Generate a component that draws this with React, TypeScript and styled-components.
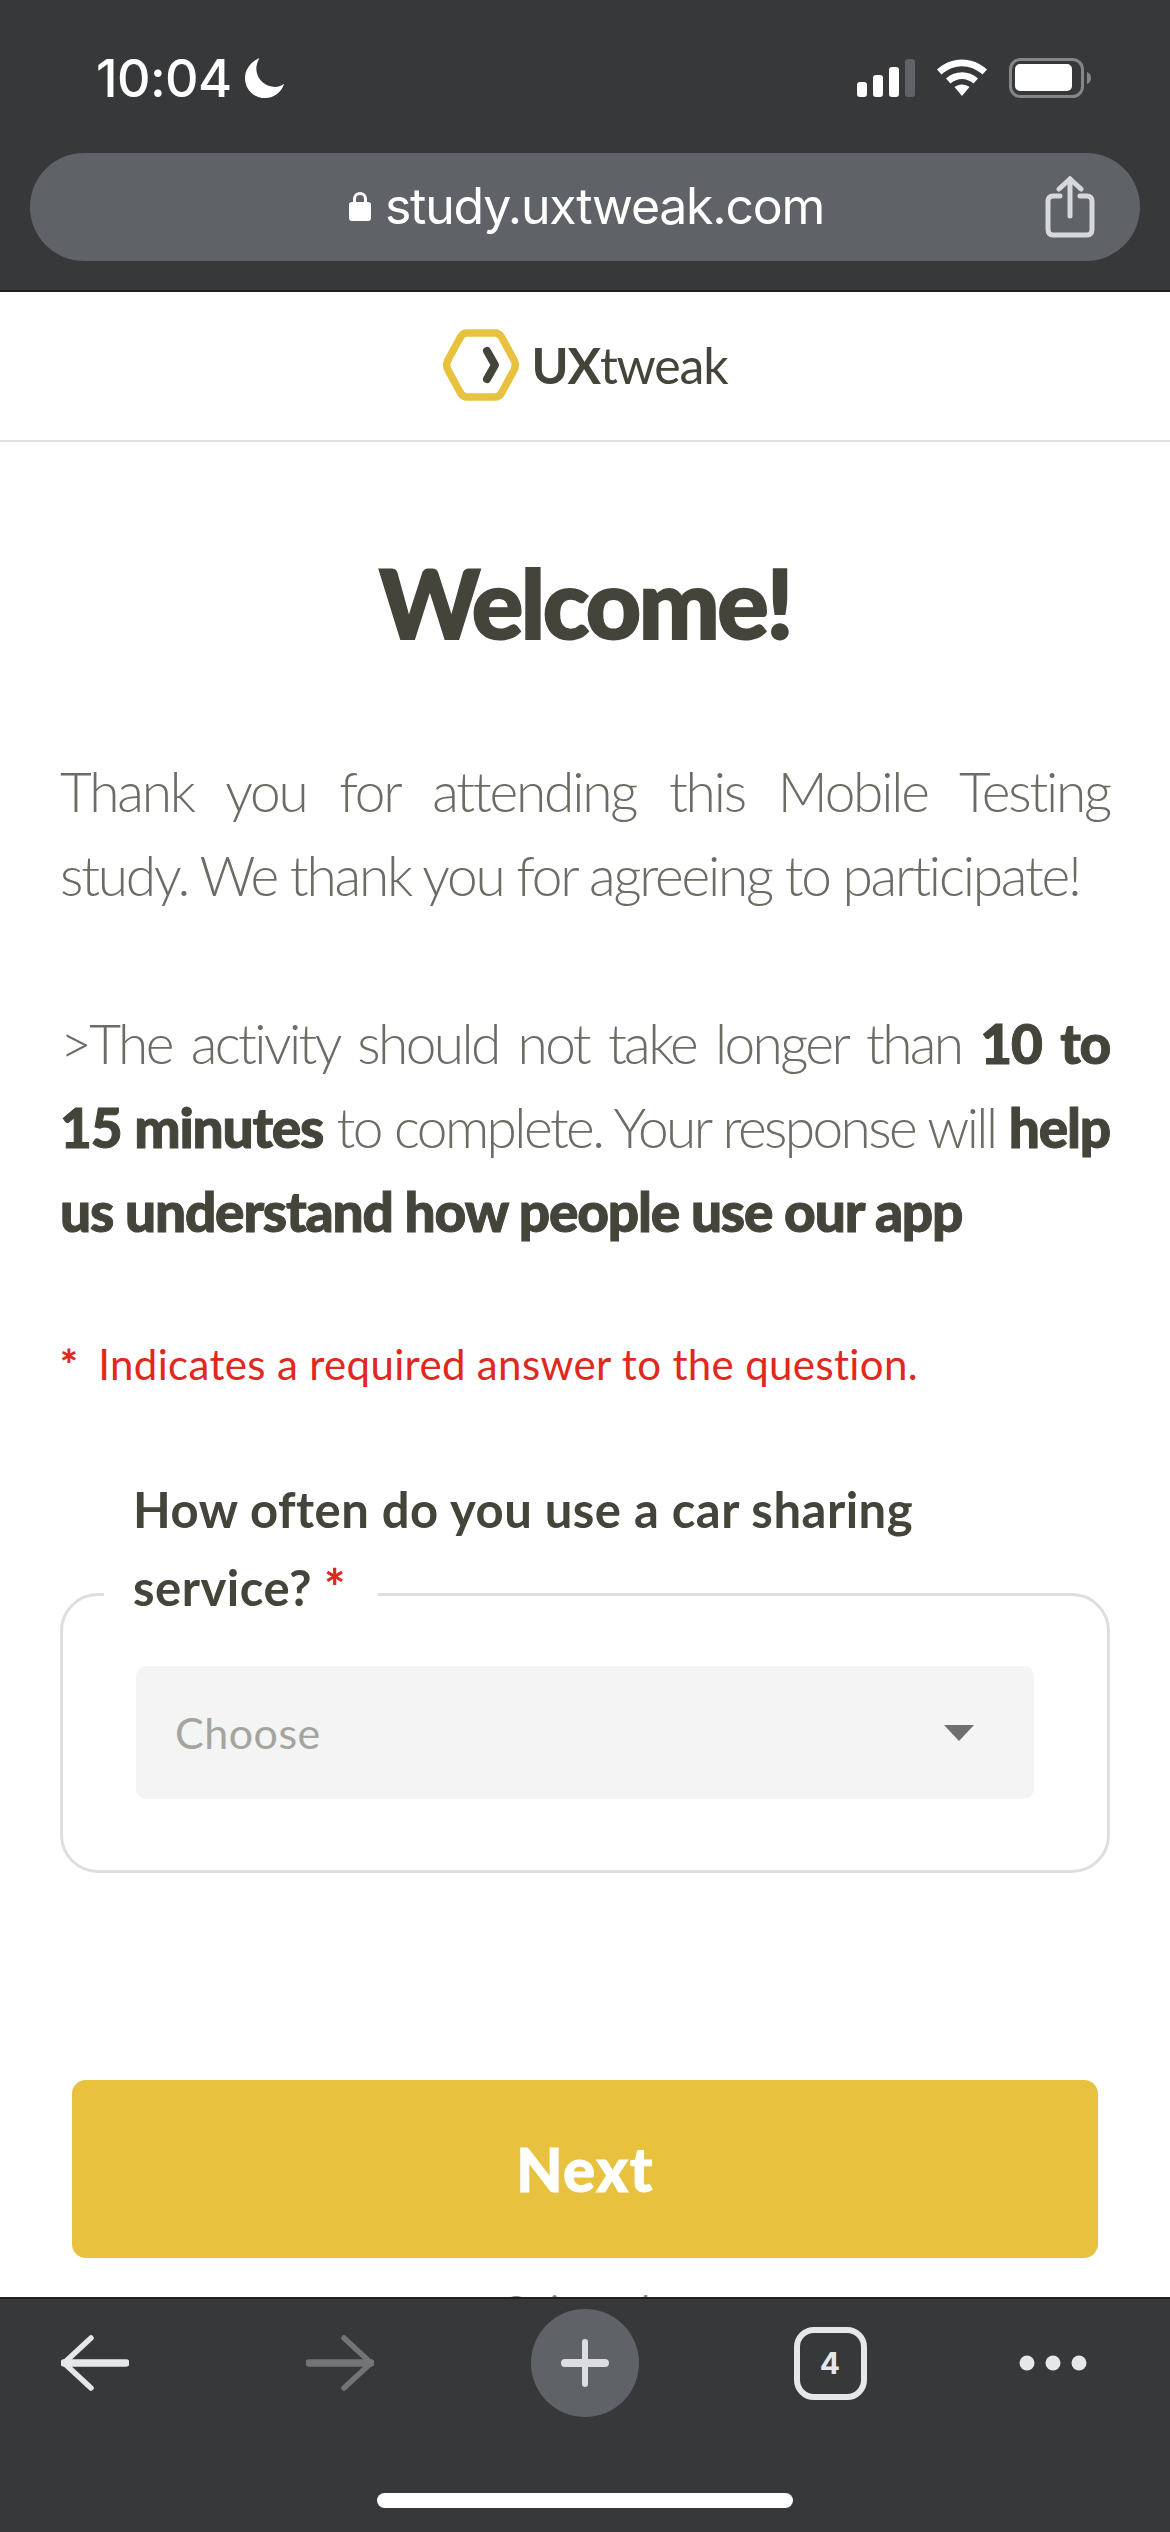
import React from "react";
import styled, { createGlobalStyle } from "styled-components";

const GlobalStyle = createGlobalStyle`
  html, body {
    margin: 0;
    padding: 0;
    background: #fff;
  }
  * {
    box-sizing: border-box;
  }
`;

const Page = styled.div`
  width: 1170px;
  height: 2532px;
  display: flex;
  flex-direction: column;
  overflow: hidden;
  font-family: "Lato", "Noto Sans", sans-serif;
`;

const TopChrome = styled.header`
  height: 292px;
  flex: none;
  background: #37383a;
  border-bottom: 2px solid #1f1f20;
  padding: 0 30px;
`;

const StatusBar = styled.div`
  height: 153px;
  display: flex;
  justify-content: space-between;
  align-items: flex-start;
  padding: 48px 0 0 66px;
`;

const Clock = styled.div`
  display: flex;
  align-items: center;
  gap: 13px;
  height: 60px;
  color: #fff;
  font-family: "Inter", sans-serif;
  font-size: 52px;
  font-weight: 500;
  letter-spacing: -0.6px;
`;

const StatusIcons = styled.div`
  display: flex;
  align-items: center;
  height: 60px;
  gap: 22px;
  margin-right: 49px;
`;

const UrlBar = styled.div`
  height: 108px;
  border-radius: 54px;
  background: #5f6266;
  display: flex;
  align-items: center;
  justify-content: center;
  gap: 14px;
  position: relative;
  color: #fff;
  font-family: "Inter", sans-serif;
  font-size: 50px;
  letter-spacing: -1.25px;
  padding: 0 0 2px 3px;
`;

const ShareButton = styled.span`
  position: absolute;
  right: 45px;
  top: 23px;
  display: flex;
`;

const LogoBar = styled.div`
  height: 150px;
  flex: none;
  display: flex;
  align-items: center;
  justify-content: center;
  gap: 13px;
  border-bottom: 2px solid #e0e0e0;
  padding-bottom: 3px;
`;

const LogoText = styled.div`
  color: #44443a;
  font-size: 50px;
  letter-spacing: -1.2px;
  b {
    font-weight: 700;
  }
`;

const Main = styled.main`
  flex: 1;
  min-height: 0;
  overflow: hidden;
  padding: 0 60px;
  color: #44443a;
`;

const Title = styled.h1`
  margin: 100px 0 0;
  text-align: center;
  font-size: 96px;
  line-height: 120px;
  font-weight: 900;
  letter-spacing: -2.5px;
  -webkit-text-stroke: 2px #44443a;
`;

const Intro = styled.p`
  margin: 0;
  color: #6c6c64;
  font-size: 55px;
  font-weight: 300;
  line-height: 84px;
  letter-spacing: -2.2px;
  text-align: justify;
  b {
    color: #44443a;
    font-weight: 900;
    letter-spacing: -1.2px;
    -webkit-text-stroke: 1px #44443a;
  }
`;

const FirstIntro = styled(Intro)`
  margin-top: 87px;
`;

const SecondIntro = styled(Intro)`
  margin-top: 84px;
  letter-spacing: -2.6px;
`;

const IntroLine = styled.span<{ $justified?: boolean }>`
  display: block;
  white-space: nowrap;
  text-align-last: ${(p) => (p.$justified ? "justify" : "left")};
`;

const Required = styled.div`
  margin-top: 83px;
  display: flex;
  gap: 20px;
  color: #e0281e;
  font-size: 42px;
  line-height: 56px;
  letter-spacing: 0.35px;
`;

const Star = styled.span`
  color: #e0281e;
  font-weight: 900;
`;

const QuestionSet = styled.section`
  margin-top: 201px;
  padding: 0 73px 71px;
  border: 3px solid #dedede;
  border-radius: 38px;
`;

const Question = styled.div`
  margin: -126px 0 0 -3px;
  font-size: 49px;
  font-weight: 700;
  line-height: 78px;
  letter-spacing: 0.5px;
`;

const QuestionTail = styled.span`
  display: inline-block;
  margin-left: -29px;
  padding: 0 32px 0 29px;
  background: #fff;
`;

const Select = styled.div`
  height: 133px;
  margin-top: 40px;
  border-radius: 10px;
  background: #f4f4f4;
  padding: 0 60px 0 39px;
  display: flex;
  align-items: center;
  justify-content: space-between;
  color: #a5a5a0;
  font-size: 43px;
  letter-spacing: 0.5px;
`;

const Caret = styled.span`
  width: 0;
  height: 0;
  border-left: 15px solid transparent;
  border-right: 15px solid transparent;
  border-top: 16px solid #6e6e6e;
`;

const NextButton = styled.button`
  display: block;
  width: 1026px;
  height: 178px;
  margin: 207px 0 0 12px;
  border: 0;
  border-radius: 14px;
  background: #e8c23f;
  color: #fff;
  font-family: inherit;
  font-size: 60px;
  font-weight: 900;
  letter-spacing: 1.5px;
  -webkit-text-stroke: 1px #fff;
`;

const FooterLink = styled.div`
  margin-top: 25px;
  text-align: center;
  color: #8a8a84;
  font-size: 36px;
  line-height: 50px;
`;

const BottomChrome = styled.footer`
  height: 235px;
  flex: none;
  background: #37383a;
  border-top: 2px solid #1f1f20;
  display: flex;
  flex-direction: column;
  align-items: center;
`;

const ToolRow = styled.nav`
  align-self: flex-start;
  height: 108px;
  margin: 10px 0 0 -27.5px;
  display: grid;
  grid-template-columns: repeat(4, 245px) 201px;
  align-items: center;
  justify-items: center;
`;

const PlusButton = styled.span`
  width: 108px;
  height: 108px;
  border-radius: 50%;
  background: #5f6266;
  display: flex;
  align-items: center;
  justify-content: center;
`;

const TabCount = styled.span`
  width: 73px;
  height: 73px;
  border: 6px solid #e6e7ea;
  border-radius: 20px;
  display: flex;
  align-items: center;
  justify-content: center;
  color: #e6e7ea;
  font-family: "Inter", sans-serif;
  font-size: 30px;
  font-weight: 700;
`;

const HomeIndicator = styled.span`
  width: 416px;
  height: 15px;
  margin-top: 76px;
  border-radius: 8px;
  background: #fff;
`;

const SignalIcon = () => (
  <svg width="58" height="38" viewBox="0 0 58 38">
    <rect x="0" y="23" width="10" height="15" rx="3" fill="#fff" />
    <rect x="16" y="16" width="10" height="22" rx="3" fill="#fff" />
    <rect x="32" y="8" width="10" height="30" rx="3" fill="#fff" />
    <rect x="48" y="0" width="10" height="38" rx="3" fill="#5f6266" />
  </svg>
);

const WifiIcon = () => (
  <svg width="50" height="38" viewBox="0 0 50 38">
    <path d="M0 10.5 C14 -3 36 -3 50 10.5 L45.5 15.5 C33 4.5 17 4.5 4.5 15.5 Z" fill="#fff" />
    <path d="M9 19.5 C18 11 32 11 41 19.5 L36.5 24.5 C29.5 18.5 20.5 18.5 13.5 24.5 Z" fill="#fff" />
    <path d="M17.5 28 C22 24.5 28 24.5 32.5 28 L25 37 Z" fill="#fff" />
  </svg>
);

const BatteryIcon = () => (
  <svg width="82" height="40" viewBox="0 0 82 40">
    <rect x="1.5" y="1.5" width="72" height="37" rx="10" fill="none" stroke="#85868a" strokeWidth="3" />
    <rect x="6" y="6" width="57" height="27" rx="5" fill="#fff" />
    <path d="M78 14 C81 15 82 17.5 82 20 C82 22.5 81 25 78 26 Z" fill="#85868a" />
  </svg>
);

const MoonIcon = () => (
  <svg width="40" height="40" viewBox="0 0 42 42">
    <path
      d="M15 0 C6 4 0 12 0 21 C0 33 9 42 21 42 C31 42 39 35 41 27 C37 30 32 31 28 30 C18 28 11 19 12 9 C12.5 6 13.5 3 15 0 Z"
      fill="#fff"
    />
  </svg>
);

const LockIcon = () => (
  <svg width="22" height="30" viewBox="0 0 22 30">
    <path d="M5.5 13 V8 C5.5 0.5 16.5 0.5 16.5 8 V13" fill="none" stroke="#fff" strokeWidth="3" />
    <rect x="0" y="11" width="22" height="19" rx="3" fill="#fff" />
  </svg>
);

const ShareIcon = () => (
  <svg width="50" height="62" viewBox="0 0 50 62" fill="none" stroke="#d6d8de" strokeWidth="5" strokeLinecap="round">
    <path d="M15 20 H8 C5 20 3 22 3 25 V53 C3 57 5 59 8 59 H42 C45 59 47 57 47 53 V25 C47 22 45 20 42 20 H35" strokeLinejoin="round" />
    <path d="M25 40 V3" />
    <path d="M14 13 L25 3 L36 13" />
  </svg>
);

const HexLogo = () => (
  <svg width="76" height="72" viewBox="0 0 76 72">
    <path
      d="M24 4 H52 C55 4 57 5.5 58.5 8 L71 31 C72.5 34 72.5 38 71 41 L58.5 64 C57 66.5 55 68 52 68 H24 C21 68 19 66.5 17.5 64 L5 41 C3.5 38 3.5 34 5 31 L17.5 8 C19 5.5 21 4 24 4 Z"
      fill="none"
      stroke="#e8c23f"
      strokeWidth="7.5"
    />
    <path d="M44 22 L52 36 L44 50" fill="none" stroke="#44443a" strokeWidth="8" strokeLinecap="round" strokeLinejoin="round" />
  </svg>
);

const ArrowIcon = ({ color, flip }: { color: string; flip?: boolean }) => (
  <svg
    width="68"
    height="56"
    viewBox="0 0 68 56"
    fill="none"
    stroke={color}
    strokeLinecap="round"
    strokeLinejoin="round"
    transform={flip ? "scale(-1 1)" : undefined}
  >
    <path d="M3 28 H65" strokeWidth="7.5" />
    <path d="M30 3 L3 28 L30 53" strokeWidth="5.5" />
  </svg>
);

const PlusIcon = () => (
  <svg width="48" height="48" viewBox="0 0 48 48" stroke="#dcdde1" strokeLinecap="round">
    <path d="M24 3 V45" strokeWidth="6" />
    <path d="M4 24 H44" strokeWidth="8" />
  </svg>
);

const MoreIcon = () => (
  <svg width="68" height="16" viewBox="0 0 68 16" fill="#e6e7ea">
    <circle cx="8" cy="8" r="7.5" />
    <circle cx="34" cy="8" r="7.5" />
    <circle cx="60" cy="8" r="7.5" />
  </svg>
);

const App: React.FC = () => {
  return (
    <Page>
      <GlobalStyle />
      <TopChrome>
        <StatusBar>
          <Clock>
            10:04
            <MoonIcon />
          </Clock>
          <StatusIcons>
            <SignalIcon />
            <WifiIcon />
            <BatteryIcon />
          </StatusIcons>
        </StatusBar>
        <UrlBar>
          <LockIcon />
          study.uxtweak.com
          <ShareButton>
            <ShareIcon />
          </ShareButton>
        </UrlBar>
      </TopChrome>
      <LogoBar>
        <HexLogo />
        <LogoText>
          <b>UX</b>tweak
        </LogoText>
      </LogoBar>
      <Main>
        <Title>Welcome!</Title>
        <FirstIntro>
          Thank you for attending this Mobile Testing study. We thank you for
          agreeing to participate!
        </FirstIntro>
        <SecondIntro>
          <IntroLine $justified>
            &gt;The activity should not take longer than <b>10 to</b>
          </IntroLine>
          <IntroLine $justified>
            <b>15 minutes</b> to complete. Your response will <b>help</b>
          </IntroLine>
          <IntroLine>
            <b>us understand how people use our app</b>
          </IntroLine>
        </SecondIntro>
        <Required>
          <Star>*</Star>
          Indicates a required answer to the question.
        </Required>
        <QuestionSet>
          <Question>
            How often do you use a car sharing
            <br />
            <QuestionTail>
              service? <Star>*</Star>
            </QuestionTail>
          </Question>
          <Select>
            Choose
            <Caret />
          </Select>
        </QuestionSet>
        <NextButton>Next</NextButton>
        <FooterLink>Quit study</FooterLink>
      </Main>
      <BottomChrome>
        <ToolRow>
          <ArrowIcon color="#e6e7ea" />
          <ArrowIcon color="#737477" flip />
          <PlusButton>
            <PlusIcon />
          </PlusButton>
          <TabCount>4</TabCount>
          <MoreIcon />
        </ToolRow>
        <HomeIndicator />
      </BottomChrome>
    </Page>
  );
};

export default App;
